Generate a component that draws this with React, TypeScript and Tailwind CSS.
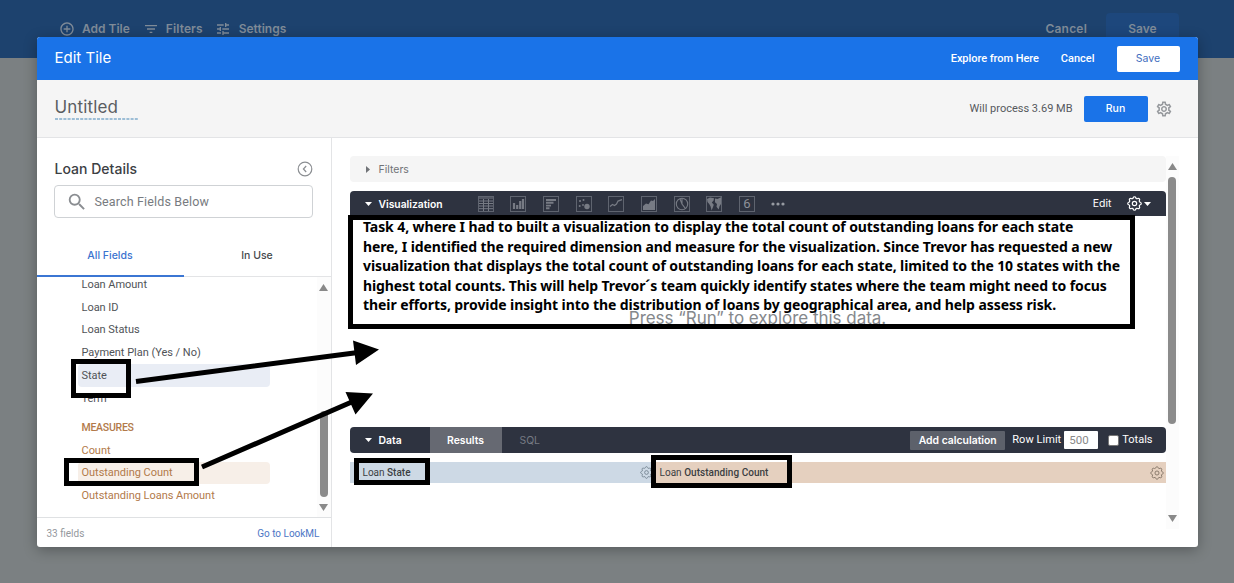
import React from "react";
import { MdAddCircleOutline, MdFilterList, MdTune, MdOutlineSettings, MdSearch } from "react-icons/md";

function Gear({ size, className = "", width = 1.6 }: { size: number; className?: string; width?: number }) {
  return (
    <svg width={size} height={size} viewBox="2 2 20 20" fill="none" stroke="currentColor" strokeWidth={width} strokeLinejoin="round" className={"shrink-0 " + className}>
      <path d="M10.325 4.317c.426-1.756 2.924-1.756 3.35 0a1.724 1.724 0 0 0 2.573 1.066c1.543-.94 3.31.826 2.37 2.37a1.724 1.724 0 0 0 1.065 2.572c1.756.426 1.756 2.924 0 3.35a1.724 1.724 0 0 0-1.066 2.573c.94 1.543-.826 3.31-2.37 2.37a1.724 1.724 0 0 0-2.572 1.065c-.426 1.756-2.924 1.756-3.35 0a1.724 1.724 0 0 0-2.573-1.066c-1.543.94-3.31-.826-2.37-2.37a1.724 1.724 0 0 0-1.065-2.572c-1.756-.426-1.756-2.924 0-3.35a1.724 1.724 0 0 0 1.066-2.573c-.94-1.543.826-3.31 2.37-2.37 1 .608 2.296.07 2.572-1.065z" />
      <circle cx="12" cy="12" r="2.9" />
    </svg>
  );
}

function Caret({ dir, className = "" }: { dir: "up" | "down" | "right"; className?: string }) {
  const d = { up: "M0 6 4.5 0 9 6z", down: "M0 0h9L4.5 6z", right: "M0 0v8l5-4z" }[dir];
  return (
    <svg viewBox={dir === "right" ? "0 0 5 8" : "0 0 9 6"} preserveAspectRatio="none" fill="currentColor" className={"shrink-0 " + className}>
      <path d={d} />
    </svg>
  );
}

const glyphs: React.ReactNode[] = [
  <path key="t" d="M1 2h14M1 5h14M1 7.500h14M1 10h14M1 12.700h14M5.500 3v12M10.500 3v12" strokeWidth="1" />,
  <path key="b" d="M4 13V7M7.200 13V9M10.200 13V5M13 13V3" strokeWidth="2.2" />,
  <path key="r" d="M3 4h10M3 6.800h7.500M3 9.600h5M3 12.300h3.500" strokeWidth="1.9" />,
  <g key="s" fill="currentColor" stroke="none"><circle cx="4" cy="5" r="1.1" /><circle cx="7.5" cy="4" r="1" /><circle cx="3.7" cy="10" r="1" /><circle cx="7" cy="9" r=".9" /><circle cx="11" cy="10.5" r="2.7" /></g>,
  <path key="l" d="M2 10.500 4.500 8.500l2 1 2-1.400 1.500-3L14 3.600" strokeWidth="1.2" />,
  <path key="a" d="M2 14v-4l3-2.500 2.500.8 2.500-3.800L12 5l2-2v11z" fill="currentColor" stroke="none" />,
  <g key="p" strokeWidth="1.1"><circle cx="8" cy="8" r="5.7" /><path d="M8 2.300V8l3.500 4.600M8 8 6 3" /></g>,
  <path key="m" d="M1 3 4 1.500l4 .7-.4 2.300L5.800 6.500l2 2.200-.8 2.200L5.600 14.500l-1-4L3.200 8 1.500 6zM9 2.500l2.500.4L15 1.200V8l-1.500 2.200-.8 3.300-2.200-2.700L11 8 9 6.200z" fill="currentColor" stroke="none" />,
];

function VizIcons() {
  return (
    <div className="ml-[35px] flex items-center gap-[16.700px] text-[#777b84]">
      {glyphs.map((g, i) => (
        <svg key={i} width="16" height="16" viewBox="0 0 16 16" fill="none" stroke="currentColor">
          <rect x=".5" y=".5" width="15" height="15" className="text-[#5f646f]" stroke="currentColor" />
          {g}
        </svg>
      ))}
      <div className="flex h-4 w-4 items-center justify-center border border-[#5f646f] font-['Roboto'] text-[13px] leading-none text-[#8d9199]">6</div>
      <svg width="14" height="4" viewBox="0 0 14 4" fill="currentColor" className="ml-[-1px] text-[#979ba2]">
        <circle cx="2" cy="2" r="1.6" /><circle cx="7" cy="2" r="1.6" /><circle cx="12" cy="2" r="1.6" />
      </svg>
    </div>
  );
}

function Field({ children, active = "" }: { children: React.ReactNode; active?: string }) {
  return <div className={"ml-[41px] flex h-[22.800px] w-[192px] shrink-0 items-center rounded-sm pt-[1.500px] pl-[4px] whitespace-nowrap " + active}>{children}</div>;
}

function Sidebar() {
  return (
    <aside className="flex w-[295px] shrink-0 flex-col border-r border-[#e3e4e6]">
      <div className="mt-[22px] flex h-[18px] items-center justify-between pr-[18px] pl-[18px]">
        <h2 className="pb-px font-['Inter'] text-[14px] font-medium tracking-[0.020px] text-[#3c4043]">Loan Details</h2>
        <svg width="16" height="16" viewBox="0 0 16 16" fill="none" stroke="#8b8e92" strokeWidth="1.2"><circle cx="8" cy="8" r="6.800" /><path d="M9.200 5 6.400 8l2.800 3" /></svg>
      </div>
      <div className="mt-[7px] ml-[17px] flex h-[33px] w-[259px] shrink-0 items-center rounded border border-[#cfd2d5] pl-[11px]">
        <MdSearch size={22} className="text-[#8a8d91]" />
        <span className="ml-[7px] pt-[2px] font-['Roboto'] text-[12.500px] tracking-[0.150px] text-[#777b80]">Search Fields Below</span>
      </div>
      <div className="mt-[18px] flex h-[41px] shrink-0 border-b border-[#e3e4e6] font-['Inter'] text-[10.500px] font-medium">
        <div className="mb-[-1px] flex w-[147px] items-center justify-center border-b-2 border-[#3b76d3] text-[#3b73cf]">All Fields</div>
        <div className="flex flex-1 items-center justify-center pb-px text-[#45484c]">In Use</div>
      </div>
      <div className="flex h-[240px] shrink-0">
        <div className="-mt-[4px] flex h-[244px] min-w-0 flex-1 flex-col overflow-hidden font-['Roboto'] text-[11px] tracking-[-0.030px] text-[#505357]">
          <Field>Loan Amount</Field>
          <Field>Loan ID</Field>
          <Field>Loan Status</Field>
          <Field>Payment Plan (Yes / No)</Field>
          <Field active="bg-[#e9edf5]">State</Field>
          <Field>Term</Field>
          <div className="flex flex-col pt-[7px] text-[#b27a4a]">
            <div className="ml-[45px] flex h-[22px] items-center pt-px text-[10.500px] font-medium tracking-[-0.250px]">MEASURES</div>
            <Field>Count</Field>
            <Field active="bg-[#f7efe8]">Outstanding Count</Field>
            <Field>Outstanding Loans Amount</Field>
          </div>
        </div>
        <div className="flex w-[14px] flex-col items-center justify-between bg-[#fcfcfc] pt-[7px] pb-[6px] text-[#898989]">
          <Caret dir="up" className="h-[7px] w-[9px]" />
          <div className="flex-1" />
          <div className="mb-[7px] h-[86px] w-2 rounded-full bg-[#8b8b8b]" />
          <Caret dir="down" className="h-[7px] w-[9px]" />
        </div>
      </div>
      <div className="flex flex-1 items-center justify-between border-t border-[#dfe1e3] pt-[2px] pr-[11px] pl-[10px] font-['Roboto'] text-[10px]">
        <span className="text-[#94989d]">33 fields</span>
        <span className="text-[#4d76c5]">Go to LookML</span>
      </div>
    </aside>
  );
}

function Content() {
  return (
    <main className="flex min-w-0 flex-1 pt-[18px] pl-[18px]">
      <div className="flex w-[816px] shrink-0 flex-col">
        <div className="flex h-[26px] items-center rounded-sm bg-[#f5f5f5] pt-px pl-4 font-['Inter'] text-[10.500px] text-[#707377]">
          <Caret dir="right" className="h-[7px] w-[4px]" />
          <span className="ml-[9px] pt-px">Filters</span>
        </div>
        <div className="mt-[9px] flex h-[25px] items-center rounded-t-sm bg-[#2e3340] pl-[15px] text-white">
          <Caret dir="down" className="h-[4px] w-[7px]" />
          <span className="ml-[7px] w-[64px] pt-[2px] font-['Inter'] text-[10.300px] font-semibold whitespace-nowrap">Visualization</span>
          <VizIcons />
          <span className="ml-auto font-['Inter'] text-[10.500px]">Edit</span>
          <Gear size={15} className="ml-[15px]" />
          <Caret dir="down" className="mr-[15px] ml-[2px] h-[4px] w-[7px]" />
        </div>
        <div className="flex h-[211px] items-center justify-center pb-[6px] font-['Inter'] text-[17px] text-[#85888c]">
          <span className="tracking-[-0.030px]">Press “Run” to explore this data.</span>
        </div>
        <div className="flex h-[26px] items-center rounded-sm bg-[#2e3340] pl-[15px] font-['Inter'] text-[10.400px] text-white">
          <Caret dir="down" className="h-[4px] w-[7px]" />
          <span className="ml-[7px] w-[51px] pt-[2px] font-semibold">Data</span>
          <div className="flex h-full w-[72px] items-center justify-center bg-[#666972] pt-[2px] font-semibold">Results</div>
          <span className="ml-[18px] pt-px text-[#777b84]">SQL</span>
          <button className="ml-auto flex h-[19px] w-[95px] items-center justify-center rounded-[1px] bg-[#5d616b] pt-px font-semibold whitespace-nowrap">Add calculation</button>
          <span className="ml-[7px] pt-px font-['Roboto'] text-[11px] tracking-[0.050px]">Row Limit</span>
          <div className="ml-[3px] flex h-[18px] w-[34px] items-center rounded-[1px] bg-white pt-px pl-[5px] font-['Roboto'] text-[11.500px] text-[#898989]">500</div>
          <div className="ml-[10px] h-[11px] w-[11px] rounded-[2px] border border-[#777] bg-white" />
          <span className="mr-[13px] ml-[3px] font-['Roboto'] text-[11px]">Totals</span>
        </div>
        <div className="mt-[9px] flex h-[21px] font-['Roboto'] text-[10px] text-[#3b3e42]">
          <div className="flex w-[303px] items-center justify-between bg-[#cdd9e5] pl-[13px]"><span>Loan <b className="font-medium">State</b></span><Gear size={13} width={1.300} className="text-[#71808d]" /></div>
          <div className="flex flex-1 items-center justify-between bg-[#e5d0bf] pr-[2px] pl-[7px]"><span className="tracking-[0.030px]">Loan <b className="font-medium">Outstanding Count</b></span><Gear size={14} width={1.300} className="text-[#827466]" /></div>
        </div>
      </div>
      <div className="flex h-[373px] w-[13px] flex-col items-center bg-[#fcfcfc] pt-[7px] pb-[7px] text-[#898989]">
        <Caret dir="up" className="h-[7px] w-[9px]" />
        <div className="mt-[7px] h-[247px] w-2 rounded-full bg-[#8b8b8b]" />
        <div className="flex-1" />
        <Caret dir="down" className="h-[7px] w-[9px]" />
      </div>
    </main>
  );
}

function Annotations() {
  return (
    <>
      <div className="absolute top-[215px] left-[348px] h-[114px] w-[787px] border-[5px] border-black pl-[10px] font-['Noto_Sans'] text-[14px] leading-[19.500px] font-bold tracking-[-0.110px] whitespace-nowrap text-black">
        <div className="-mt-[3px] tracking-[-0.090px]">Task 4, where I had to built a visualization to display the total count of outstanding loans for each state</div>
        <div>here, I identified the required dimension and measure for the visualization. Since Trevor has requested a new</div>
        <div>visualization that displays the total count of outstanding loans for each state, limited to the 10 states with the</div>
        <div>highest total counts. This will help Trevor´s team quickly identify states where the team might need to focus</div>
        <div className="tracking-[-0.080px]">their efforts, provide insight into the distribution of loans by geographical area, and help assess risk.</div>
      </div>
      <div className="absolute top-[359px] left-[71px] h-[39px] w-[60px] border-[5px] border-black" />
      <div className="absolute top-[458px] left-[64px] h-[28px] w-[135px] border-[5px] border-black" />
      <div className="absolute top-[458px] left-[354px] h-[27px] w-[76px] border-[5px] border-black" />
      <div className="absolute top-[455px] left-[651px] h-[33px] w-[141px] border-[5px] border-black" />
      <svg className="absolute top-[330px] left-[130px]" width="260" height="150" viewBox="130 330 260 150">
        <path d="M136 381.500 358 352.500M202 467 354 401" stroke="black" strokeWidth="5" />
        <path d="M353 340.500 379 349.500 356 365zM345.500 392 373 393.500 355.500 414.500z" />
      </svg>
    </>
  );
}

export default function App() {
  return (
    <div className="relative flex h-[583px] w-[1234px] flex-col overflow-hidden bg-[linear-gradient(#1d426e_58px,#7b8082_58px)]">
      <header className="flex h-[37px] shrink-0 items-start px-[60px] font-['Inter'] text-[12px] font-semibold text-[#7f8b98]">
        <div className="mt-[20px] flex h-[18px] items-center">
          <MdAddCircleOutline size={16} className="-ml-[1px]" /><span className="ml-[7px]">Add Tile</span>
          <MdFilterList size={16} className="ml-[13px]" /><span className="ml-[7px] tracking-[0.100px]">Filters</span>
          <MdTune size={16} className="ml-[12px]" /><span className="ml-[8px]">Settings</span>
        </div>
        <span className="mt-[20px] ml-auto flex h-[18px] items-center tracking-[0.200px]">Cancel</span>
        <div className="mt-[13px] mr-[-5px] ml-[19px] flex h-[32px] w-[73px] items-center justify-center rounded-t-sm bg-[#1d477c]">Save</div>
      </header>
      <section className="ml-[36.500px] flex h-[510px] w-[1161px] flex-col rounded-[3px] bg-white shadow-[0_3px_14px_rgba(0,0,0,0.3)]">
        <div className="flex h-[43px] shrink-0 items-center rounded-t-[3px] bg-[#1a73e8] pr-[18px] pl-[18px] text-white">
          <h1 className="font-['Inter'] text-[15px]">Edit Tile</h1>
          <span className="ml-auto pt-px font-['Roboto'] text-[11px] font-medium tracking-[-0.050px]">Explore from Here</span>
          <span className="ml-[22px] pt-px font-['Roboto'] text-[11px] font-medium">Cancel</span>
          <button className="ml-[22px] flex h-[26px] w-[63px] items-center justify-center rounded-[2px] bg-white font-['Inter'] text-[10.500px] text-[#3f6ec0]">Save</button>
        </div>
        <div className="flex h-[58px] shrink-0 items-center border-b border-[#e3e4e6] bg-[#f5f5f5] pl-[18px]">
          <div className="mt-[-2px] w-[84px] font-['Inter'] text-[17px] leading-[22px] tracking-[0.150px] text-[#5a5d61]">
            Untitled
            <svg width="84" height="2" className="block"><path d="M0 1h84" stroke="#4787b8" strokeWidth="1.2" strokeDasharray="3 1.200" /></svg>
          </div>
          <span className="ml-auto pt-[2px] font-['Roboto'] text-[11px] text-[#56595d]">Will process 3.69 MB</span>
          <button className="ml-[11px] flex h-[26px] w-[64px] items-center justify-center rounded-[2px] bg-[#1a73e8] font-['Inter'] text-[10.500px] font-medium text-white">Run</button>
          <MdOutlineSettings size={18} className="mr-[25px] ml-[7px] text-[#96999d]" />
        </div>
        <div className="flex min-h-0 flex-1"><Sidebar /><Content /></div>
      </section>
      <Annotations />
    </div>
  );
}
